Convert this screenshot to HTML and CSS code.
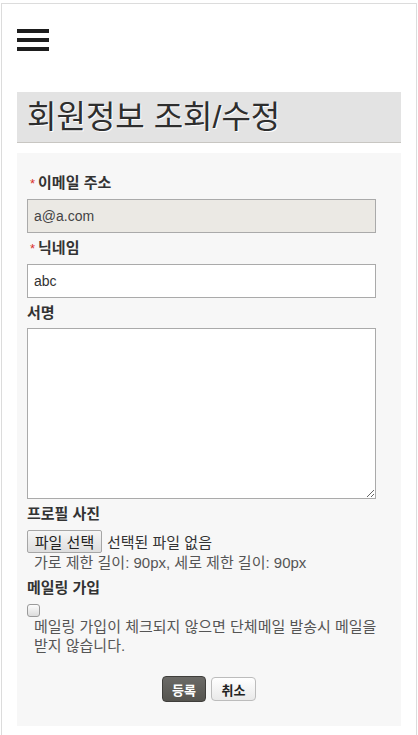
FILE: index.html
```html
<!DOCTYPE html>
<html lang="ko">
<head>
<meta charset="utf-8">
<title>회원정보 조회/수정</title>
<link rel="stylesheet" href="styles.css">
</head>
<body>
<div class="page">
  <header class="topbar">
    <button class="menu" type="button" aria-label="메뉴">
      <span class="bar"></span><span class="bar"></span><span class="bar"></span>
    </button>
  </header>
  <h1 class="title">회원정보 조회/수정</h1>
  <form class="panel">
    <div class="field">
      <label class="label"><span class="req">*</span>이메일 주소</label>
      <input class="input input-disabled" type="text" value="a@a.com" disabled>
    </div>
    <div class="field">
      <label class="label"><span class="req">*</span>닉네임</label>
      <input class="input" type="text" value="abc">
    </div>
    <div class="field">
      <label class="label">서명</label>
      <textarea class="textarea"></textarea>
    </div>
    <div class="field">
      <label class="label">프로필 사진</label>
      <div class="file-row">
        <span class="file-btn">파일 선택</span>
        <span class="file-name">선택된 파일 없음</span>
      </div>
      <p class="help">가로 제한 길이: 90px, 세로 제한 길이: 90px</p>
    </div>
    <div class="field field-mail">
      <label class="label">메일링 가입</label>
      <span class="check"></span>
      <p class="help help-mail">메일링 가입이 체크되지 않으면 단체메일 발송시 메일을 받지 않습니다.</p>
    </div>
    <div class="actions">
      <button class="btn btn-primary" type="button">등록</button>
      <button class="btn btn-default" type="button">취소</button>
    </div>
  </form>
</div>
</body>
</html>
```
FILE: styles.css
```css
* { box-sizing: border-box; }
html, body { margin: 0; padding: 0; background: #fff; }
body {
  font-family: "Liberation Sans", "Noto Sans CJK KR", sans-serif;
  font-size: 15px;
  color: #333;
}
.page {
  margin: 3px 1px 0 1px;
  border: 1px solid #dcdcdc;
  border-bottom: none;
  padding: 0 15px 12px;
  min-height: 740px;
  background: #fff;
}
.topbar { padding-top: 25px; height: 88px; }
.menu {
  display: flex;
  flex-direction: column;
  gap: 5px;
  width: 32px;
  padding: 0;
  border: 0;
  background: none;
}
.bar { display: block; width: 32px; height: 4px; background: #1d1d1d; }
.title {
  margin: 0;
  height: 51px;
  background: #e3e3e3;
  border-bottom: 1px solid #c8c6c2;
  font-size: 32px;
  font-weight: normal;
  line-height: 50px;
  padding: 0 10px;
  color: #2e2e2e;
  text-shadow: 1px 1px 0 #fff;
}
.panel {
  margin-top: 10px;
  background: #f7f7f7;
  padding: 20px 10px 24px;
}
.field { margin-bottom: 5px; }
.label {
  display: block;
  font-weight: bold;
  line-height: 20px;
  margin-bottom: 5px;
  color: #333;
}
.req { color: #d9302c; font-weight: normal; font-size: 13px; margin: 0 3px 0 3px; }
.input {
  display: block;
  width: 96%;
  height: 34px;
  border: 1px solid #aaa;
  background: #fff;
  font-family: "Liberation Sans", "Noto Sans CJK KR", sans-serif;
  font-size: 14px;
  color: #333;
  padding: 0 6px;
  margin: 0;
  border-radius: 0;
}
.input-disabled { background: #ebe9e4; color: #444; }
.textarea {
  display: block;
  width: 96%;
  height: 171px;
  border: 1px solid #aaa;
  background: #fff;
  margin: 0;
  resize: vertical;
}
.file-row {
  display: flex;
  align-items: center;
  margin-top: 6px;
  height: 23px;
}
.file-btn {
  display: inline-flex;
  align-items: center;
  justify-content: center;
  height: 23px;
  width: 75px;
  border: 1px solid #a6a6a6;
  border-radius: 2px;
  background: linear-gradient(#f6f6f6, #dedede);
  color: #222;
  font-size: 15px;
}
.file-name { margin-left: 5px; color: #333; }
.help {
  margin: 0;
  padding-left: 7px;
  line-height: 20px;
  color: #555;
}
.field-mail { margin-top: 4px; }
.check {
  display: block;
  width: 13px;
  height: 13px;
  margin-top: 6px;
  border: 1px solid #9a9a9a;
  border-radius: 3px;
  background: linear-gradient(#fcfcfc, #dcdcdc);
}
.help-mail { line-height: 19px; margin-top: 0; }
.actions {
  display: flex;
  justify-content: center;
  align-items: center;
  gap: 5px;
  margin-top: 21px;
}
.btn {
  font-family: "Liberation Sans", "Noto Sans CJK KR", sans-serif;
  font-size: 13px;
  font-weight: bold;
  border-radius: 4px;
  padding: 0;
  cursor: pointer;
}
.btn-primary {
  width: 44px;
  height: 26px;
  color: #fff;
  background: linear-gradient(#6b6a67, #55544f);
  border: 1px solid #3f3e3b;
}
.btn-default {
  width: 45px;
  height: 24px;
  color: #222;
  background: linear-gradient(#ffffff, #e9e9e9);
  border: 1px solid #bcbcbc;
}
```
